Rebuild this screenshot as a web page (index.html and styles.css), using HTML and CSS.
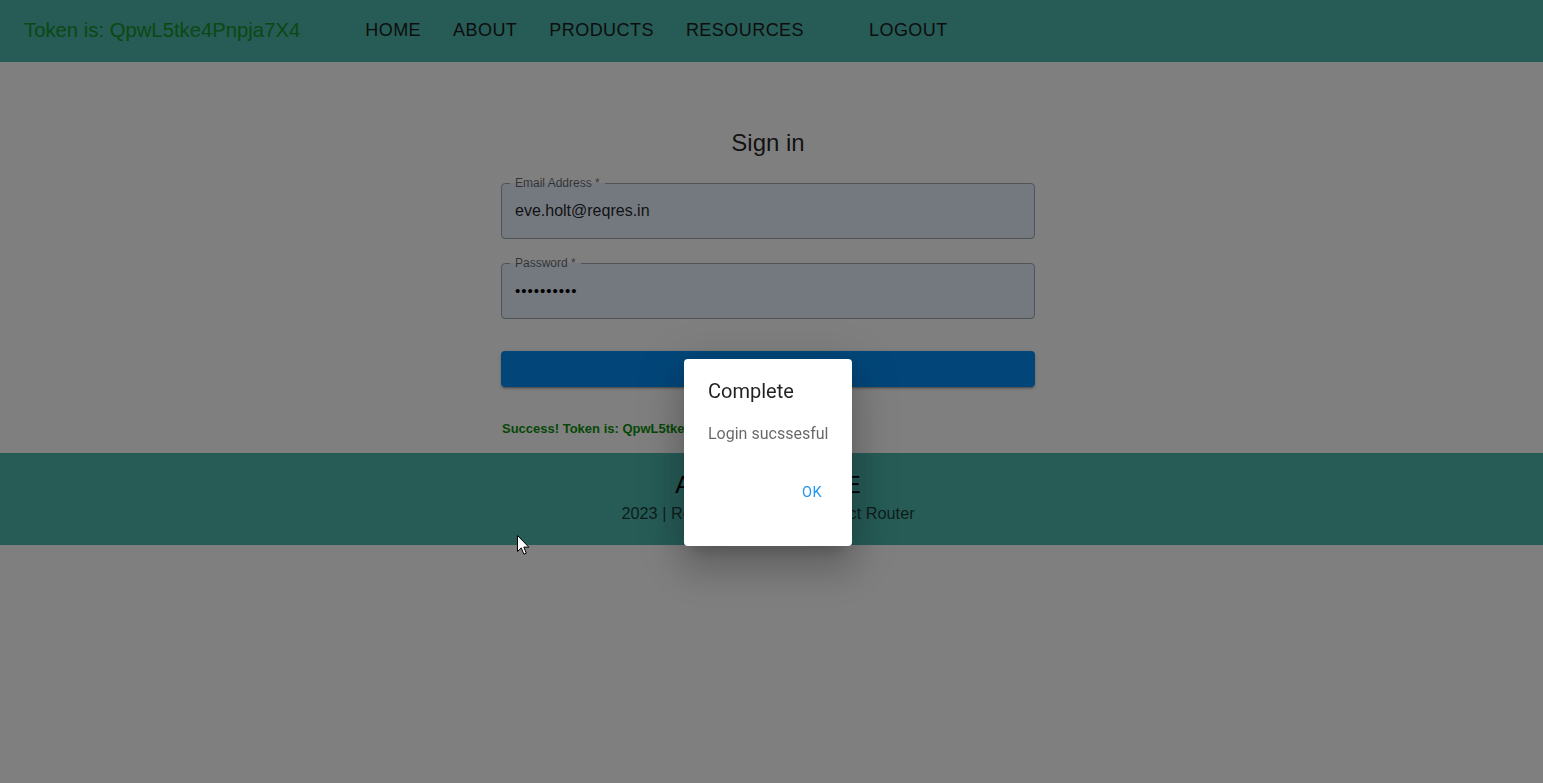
FILE: index.html
```html
<!DOCTYPE html>
<html lang="en">
<head>
<meta charset="utf-8">
<title>Sign in</title>
<link rel="stylesheet" href="styles.css">
</head>
<body>
<header class="header">
  <div class="token">Token is: QpwL5tke4Pnpja7X4</div>
  <nav class="nav">
    <a class="nav-link">HOME</a>
    <a class="nav-link">ABOUT</a>
    <a class="nav-link">PRODUCTS</a>
    <a class="nav-link">RESOURCES</a>
    <a class="nav-link logout">LOGOUT</a>
  </nav>
</header>

<main class="main">
  <div class="signin">
    <h1 class="title">Sign in</h1>
    <form class="form">
      <div class="field">
        <fieldset class="outline"><legend>Email Address *</legend></fieldset>
        <span class="label">Email Address *</span>
        <div class="value">eve.holt@reqres.in</div>
      </div>
      <div class="field">
        <fieldset class="outline"><legend>Password *</legend></fieldset>
        <span class="label">Password *</span>
        <div class="value dots">••••••••••</div>
      </div>
      <button type="button" class="submit">SIGN IN</button>
      <p class="success">Success! Token is: QpwL5tke4Pnpja7X4</p>
    </form>
  </div>
</main>

<footer class="footer">
  <div class="footer-title">AUTH EXAMPLE</div>
  <div class="footer-sub">2023 | React | Material UI | React Router</div>
</footer>

<div class="backdrop"></div>

<div class="dialog" role="dialog">
  <h2 class="dialog-title">Complete</h2>
  <p class="dialog-text">Login sucssesful</p>
  <div class="dialog-actions">
    <button type="button" class="ok">OK</button>
  </div>
</div>

<svg class="cursor" width="13" height="21" viewBox="0 0 13 21">
  <path d="M0.5 0.5 L0.5 16.5 L4.3 12.9 L6.9 19.2 L9.3 18.2 L6.8 12.1 L11.8 12.1 Z" fill="#fff" stroke="#000" stroke-width="1"/>
</svg>
</body>
</html>
```

FILE: styles.css
```css
* { box-sizing: border-box; }

html, body {
  margin: 0;
  padding: 0;
  background: #ffffff;
  font-family: "Liberation Sans", Arial, sans-serif;
}

.header {
  height: 62px;
  background: #4db6ac;
  display: flex;
  align-items: center;
  padding: 0 24px;
}

.token {
  font-size: 20.3px;
  color: rgb(22, 145, 38);
  margin-top: -2px;
}

.nav {
  display: flex;
  gap: 32px;
  margin-left: 65px;
  margin-top: -2px;
}

.nav-link {
  font-size: 18px;
  letter-spacing: 0.45px;
  color: #1b1b1b;
}

.nav-link.logout {
  margin-left: 33px;
}

.main {
  display: flex;
  justify-content: center;
  padding-top: 65px;
  padding-right: 7px;
  height: 391px;
}

.signin {
  width: 534px;
  display: flex;
  flex-direction: column;
  align-items: center;
}

.title {
  margin: 0;
  font-size: 24px;
  font-weight: 400;
  line-height: 32px;
  color: rgba(0, 0, 0, 0.87);
}

.form {
  width: 100%;
  margin-top: 24px;
}

.field {
  position: relative;
  height: 56px;
  background: rgb(232, 240, 254);
  border-radius: 4px;
  margin-bottom: 24px;
}

.outline {
  position: absolute;
  inset: -5px 0 0 0;
  margin: 0;
  padding: 0 8px;
  border: 1px solid rgba(0, 0, 0, 0.3);
  border-radius: 4px;
  pointer-events: none;
}

.outline legend {
  visibility: hidden;
  font-size: 12px;
  padding: 0 5px;
  height: 11px;
  line-height: 11px;
}

.label {
  position: absolute;
  left: 14px;
  top: -7px;
  font-size: 12px;
  line-height: 14px;
  color: rgba(0, 0, 0, 0.6);
}

.value {
  padding: 17px 14px;
  font-size: 16px;
  line-height: 22px;
  color: rgba(0, 0, 0, 0.87);
}

.value.dots {
  font-size: 15px;
  letter-spacing: 1px;
  color: #000;
}

.submit {
  display: block;
  width: 100%;
  height: 36px;
  margin-top: 32px;
  border: none;
  border-radius: 4px;
  background: rgb(4, 140, 242);
  color: #fff;
  font-family: "Roboto", sans-serif;
  font-weight: 500;
  font-size: 14px;
  box-shadow: 0 3px 1px -2px rgba(0,0,0,0.2), 0 2px 2px 0 rgba(0,0,0,0.14), 0 1px 5px 0 rgba(0,0,0,0.12);
}

.success {
  margin: 34px 0 0 1px;
  font-size: 13px;
  font-weight: 700;
  color: #0a900a;
  line-height: 16px;
}

.footer {
  height: 92px;
  background: #4db6ac;
  display: flex;
  flex-direction: column;
  align-items: center;
  padding-top: 18px;
  padding-right: 7px;
}

.footer-title {
  font-size: 24px;
  line-height: 28px;
  color: #000;
}

.footer-sub {
  margin-top: 5px;
  font-size: 16.3px;
  line-height: 18px;
  color: rgba(0, 0, 0, 0.7);
}

.backdrop {
  position: fixed;
  inset: 0;
  background: rgba(0, 0, 0, 0.5);
}

.dialog {
  position: absolute;
  left: 684px;
  top: 359px;
  width: 168px;
  height: 187px;
  background: #fff;
  border-radius: 4px;
  box-shadow: 0 11px 15px -7px rgba(0,0,0,0.2), 0 24px 38px 3px rgba(0,0,0,0.14), 0 9px 46px 8px rgba(0,0,0,0.12);
  display: flex;
  flex-direction: column;
  font-family: "Roboto", sans-serif;
}

.dialog-title {
  margin: 16px 0 0;
  padding: 0 24px;
  font-size: 20px;
  font-weight: 400;
  line-height: 32px;
  color: rgba(0, 0, 0, 0.87);
}

.dialog-text {
  margin: 15px 0 0;
  padding: 0 24px;
  font-size: 16px;
  line-height: 24px;
  white-space: nowrap;
  color: rgba(0, 0, 0, 0.6);
}

.dialog-actions {
  display: flex;
  justify-content: flex-end;
  padding: 0 8px;
  margin-top: 28px;
}

.ok {
  min-width: 64px;
  height: 36px;
  border: none;
  background: transparent;
  color: #2196f3;
  font-family: "Roboto", sans-serif;
  font-size: 14.5px;
  font-weight: 400;
  letter-spacing: 0.4px;
}

.cursor {
  position: absolute;
  left: 517px;
  top: 535px;
}
```
